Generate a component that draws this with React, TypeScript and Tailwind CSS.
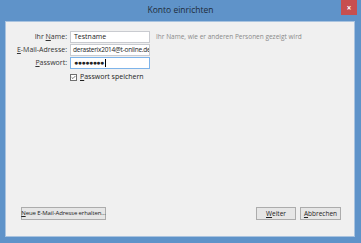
import { Check } from 'lucide-react'

const font = { fontFamily: '"Open Sans", "Noto Sans", sans-serif' }

function Field({ label, mnemonic, rest, children }: { label?: string; mnemonic: string; rest: string; children: React.ReactNode }) {
  return (
    <>
      <div className="flex h-[12px] items-center justify-end pr-[3px] text-[7px] text-[#333]">
        <span className="whitespace-pre">
          {label}
          <span className="underline">{mnemonic}</span>
          {rest}
        </span>
      </div>
      {children}
    </>
  )
}

export default function App() {
  return (
    <div className="flex h-[243px] w-[361px] flex-col bg-[#5f93c9] text-[#222]" style={font}>
      <div className="relative flex h-[21px] shrink-0 items-center justify-center">
        <span className="text-[8.5px] text-[#1e2b3a]">Konto einrichten</span>
        <div className="absolute right-[4px] top-0 flex h-[15px] w-[16px] items-center justify-center bg-[#c74f4f] text-[8px] font-bold text-white">
          ×
        </div>
      </div>
      <div className="mb-[6px] ml-[5px] mr-[6px] flex flex-1 flex-col border border-[#a9c3df] bg-[#f0f0f0] pb-[16px] pl-[15px] pr-[13px] pt-[9px]">
        <div className="-ml-[15px] grid grid-cols-[64px_80px_1fr] items-center gap-y-[1px]">
          <Field label="Ihr " mnemonic="N" rest="ame:">
            <div className="flex h-[12px] items-center border border-[#c9cbd0] bg-white px-[3px] text-[7px]">Testname</div>
          </Field>
          <div className="whitespace-nowrap pl-[6px] text-[6.5px] text-[#8a8a8a]">Ihr Name, wie er anderen Personen gezeigt wird</div>
          <Field mnemonic="E" rest="-Mail-Adresse:">
            <div className="flex h-[12px] items-center overflow-hidden whitespace-nowrap border border-[#c9cbd0] bg-white px-[2px] text-[6.5px] tracking-[-0.25px]">
              derasterix2014@t-online.de
            </div>
          </Field>
          <div />
          <Field mnemonic="P" rest="asswort:">
            <div className="flex h-[12px] items-center border border-[#7eb4ea] bg-white px-[3px] text-[7px] tracking-[-0.5px]">
              ●●●●●●●●<span className="ml-[1px] inline-block h-[8px] w-px bg-black" />
            </div>
          </Field>
          <div />
          <div />
          <div className="col-span-2 mt-[2px] flex items-center gap-[3px] text-[7px]">
            <div className="flex h-[7px] w-[7px] items-center justify-center border border-[#707070] bg-white">
              <Check className="h-[7px] w-[7px]" strokeWidth={3} />
            </div>
            <span>
              <span className="underline">P</span>asswort speichern
            </span>
          </div>
        </div>
        <div className="mt-auto flex items-end justify-between">
          <button className="flex h-[13px] w-[85px] items-center justify-center whitespace-nowrap border border-[#acacac] bg-[#e6e6e6] text-[6px] tracking-[-0.1px]">
            <span>
              <span className="underline">N</span>eue E-Mail-Adresse erhalten...
            </span>
          </button>
          <div className="flex gap-[4px]">
            <button className="flex h-[13px] w-[40px] items-center justify-center whitespace-nowrap border border-[#acacac] bg-[#e6e6e6] text-[6.5px]">
              <span>
                <span className="underline">W</span>eiter
              </span>
            </button>
            <button className="flex h-[13px] w-[41px] items-center justify-center whitespace-nowrap border border-[#acacac] bg-[#e6e6e6] text-[6.5px]">
              <span>
                <span className="underline">A</span>bbrechen
              </span>
            </button>
          </div>
        </div>
      </div>
    </div>
  )
}
